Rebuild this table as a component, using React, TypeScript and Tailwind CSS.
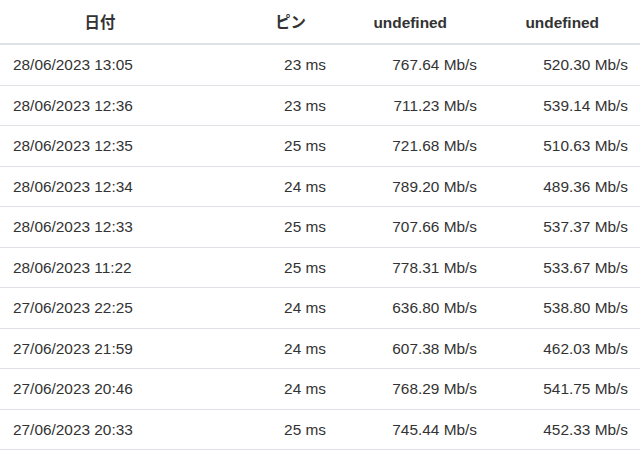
const rows = [
	['28/06/2023 13:05', '23 ms', '767.64 Mb/s', '520.30 Mb/s'],
	['28/06/2023 12:36', '23 ms', '711.23 Mb/s', '539.14 Mb/s'],
	['28/06/2023 12:35', '25 ms', '721.68 Mb/s', '510.63 Mb/s'],
	['28/06/2023 12:34', '24 ms', '789.20 Mb/s', '489.36 Mb/s'],
	['28/06/2023 12:33', '25 ms', '707.66 Mb/s', '537.37 Mb/s'],
	['28/06/2023 11:22', '25 ms', '778.31 Mb/s', '533.67 Mb/s'],
	['27/06/2023 22:25', '24 ms', '636.80 Mb/s', '538.80 Mb/s'],
	['27/06/2023 21:59', '24 ms', '607.38 Mb/s', '462.03 Mb/s'],
	['27/06/2023 20:46', '24 ms', '768.29 Mb/s', '541.75 Mb/s'],
	['27/06/2023 20:33', '25 ms', '745.44 Mb/s', '452.33 Mb/s'],
];

const App: React.FC = () => {
	return (
		<div
			className="w-[640px] bg-white text-[#333] text-[15.4px]"
			style={{ fontFamily: '"Liberation Sans", "Noto Sans CJK JP", Arial, sans-serif' }}
		>
			<div className="grid grid-cols-[200px_138px_151px_151px] h-[45px] pt-[2px] items-center border-b-2 border-[#dee2e6] font-bold">
				<div className="text-center">日付</div>
				<div className="text-right pr-[32px]">ピン</div>
				<div className="text-right pr-[42px]">undefined</div>
				<div className="text-right pr-[41px]">undefined</div>
			</div>
			{rows.map(row => (
				<div
					key={row[0]}
					className="grid grid-cols-[200px_138px_151px_151px] h-[40.5px] items-center border-b border-[#dee2e6]"
				>
					<div className="pl-[13px]">{row[0]}</div>
					<div className="text-right pr-[12px]">{row[1]}</div>
					<div className="text-right pr-[12px]">{row[2]}</div>
					<div className="text-right pr-[12px]">{row[3]}</div>
				</div>
			))}
		</div>
	);
};

export default App;
